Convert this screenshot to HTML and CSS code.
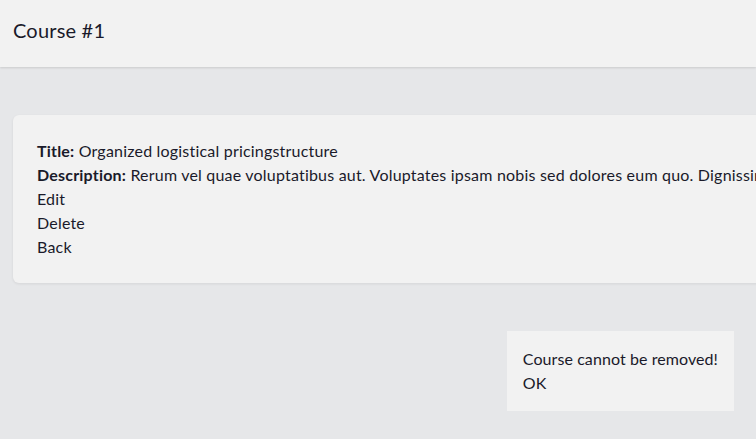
FILE: index.html
```html
<!DOCTYPE html>
<html lang="en">
<head>
<meta charset="utf-8">
<title>Course #1</title>
<link rel="stylesheet" href="styles.css">
</head>
<body>
<div class="page">
  <header class="topbar">
    <h1 class="topbar-title">Course #1</h1>
  </header>
  <main class="content">
    <section class="card">
      <div class="row"><strong>Title:</strong> Organized logistical pricingstructure</div>
      <div class="row"><strong>Description:</strong> Rerum vel quae voluptatibus aut. Voluptates ipsam nobis sed dolores eum quo. Dignissimos ut quia voluptas et maiores consequatur.</div>
      <div class="row"><a class="link" href="#">Edit</a></div>
      <div class="row"><a class="link" href="#">Delete</a></div>
      <div class="row"><a class="link" href="#">Back</a></div>
    </section>
  </main>
  <div class="toast">
    <div class="row">Course cannot be removed!</div>
    <div class="row"><a class="link" href="#">OK</a></div>
  </div>
</div>
</body>
</html>
```
FILE: styles.css
```css
html, body {
  margin: 0;
  padding: 0;
  height: 100%;
}
body {
  background: #e6e7e9;
  color: #1a1a2a;
  font-family: "Lato", "Noto Sans", sans-serif;
  font-size: 16px;
  line-height: 24px;
  overflow: hidden;
}
.page {
  min-height: 100%;
  overflow: hidden;
}
.topbar {
  box-sizing: border-box;
  height: 67px;
  padding: 16px 13px 0;
  background: #f2f2f2;
  box-shadow: 0 1px 2px rgba(0, 0, 0, 0.12);
  position: relative;
}
.topbar-title {
  margin: 0;
  font-size: 20px;
  line-height: 28px;
  font-weight: 400;
  letter-spacing: 0.2px;
}
.content {
  padding: 48px 0 0 13px;
}
.card {
  width: max-content;
  padding: 24px;
  background: #f2f2f2;
  border-radius: 6px;
  box-shadow: 0 1px 3px rgba(0, 0, 0, 0.08);
  white-space: nowrap;
  letter-spacing: 0.2px;
}
.row strong {
  font-weight: 700;
}
.link {
  color: inherit;
  text-decoration: none;
}
.toast {
  position: fixed;
  right: 22px;
  bottom: 28px;
  padding: 16px;
  background: #f2f2f2;
  letter-spacing: 0.08px;
}
```
